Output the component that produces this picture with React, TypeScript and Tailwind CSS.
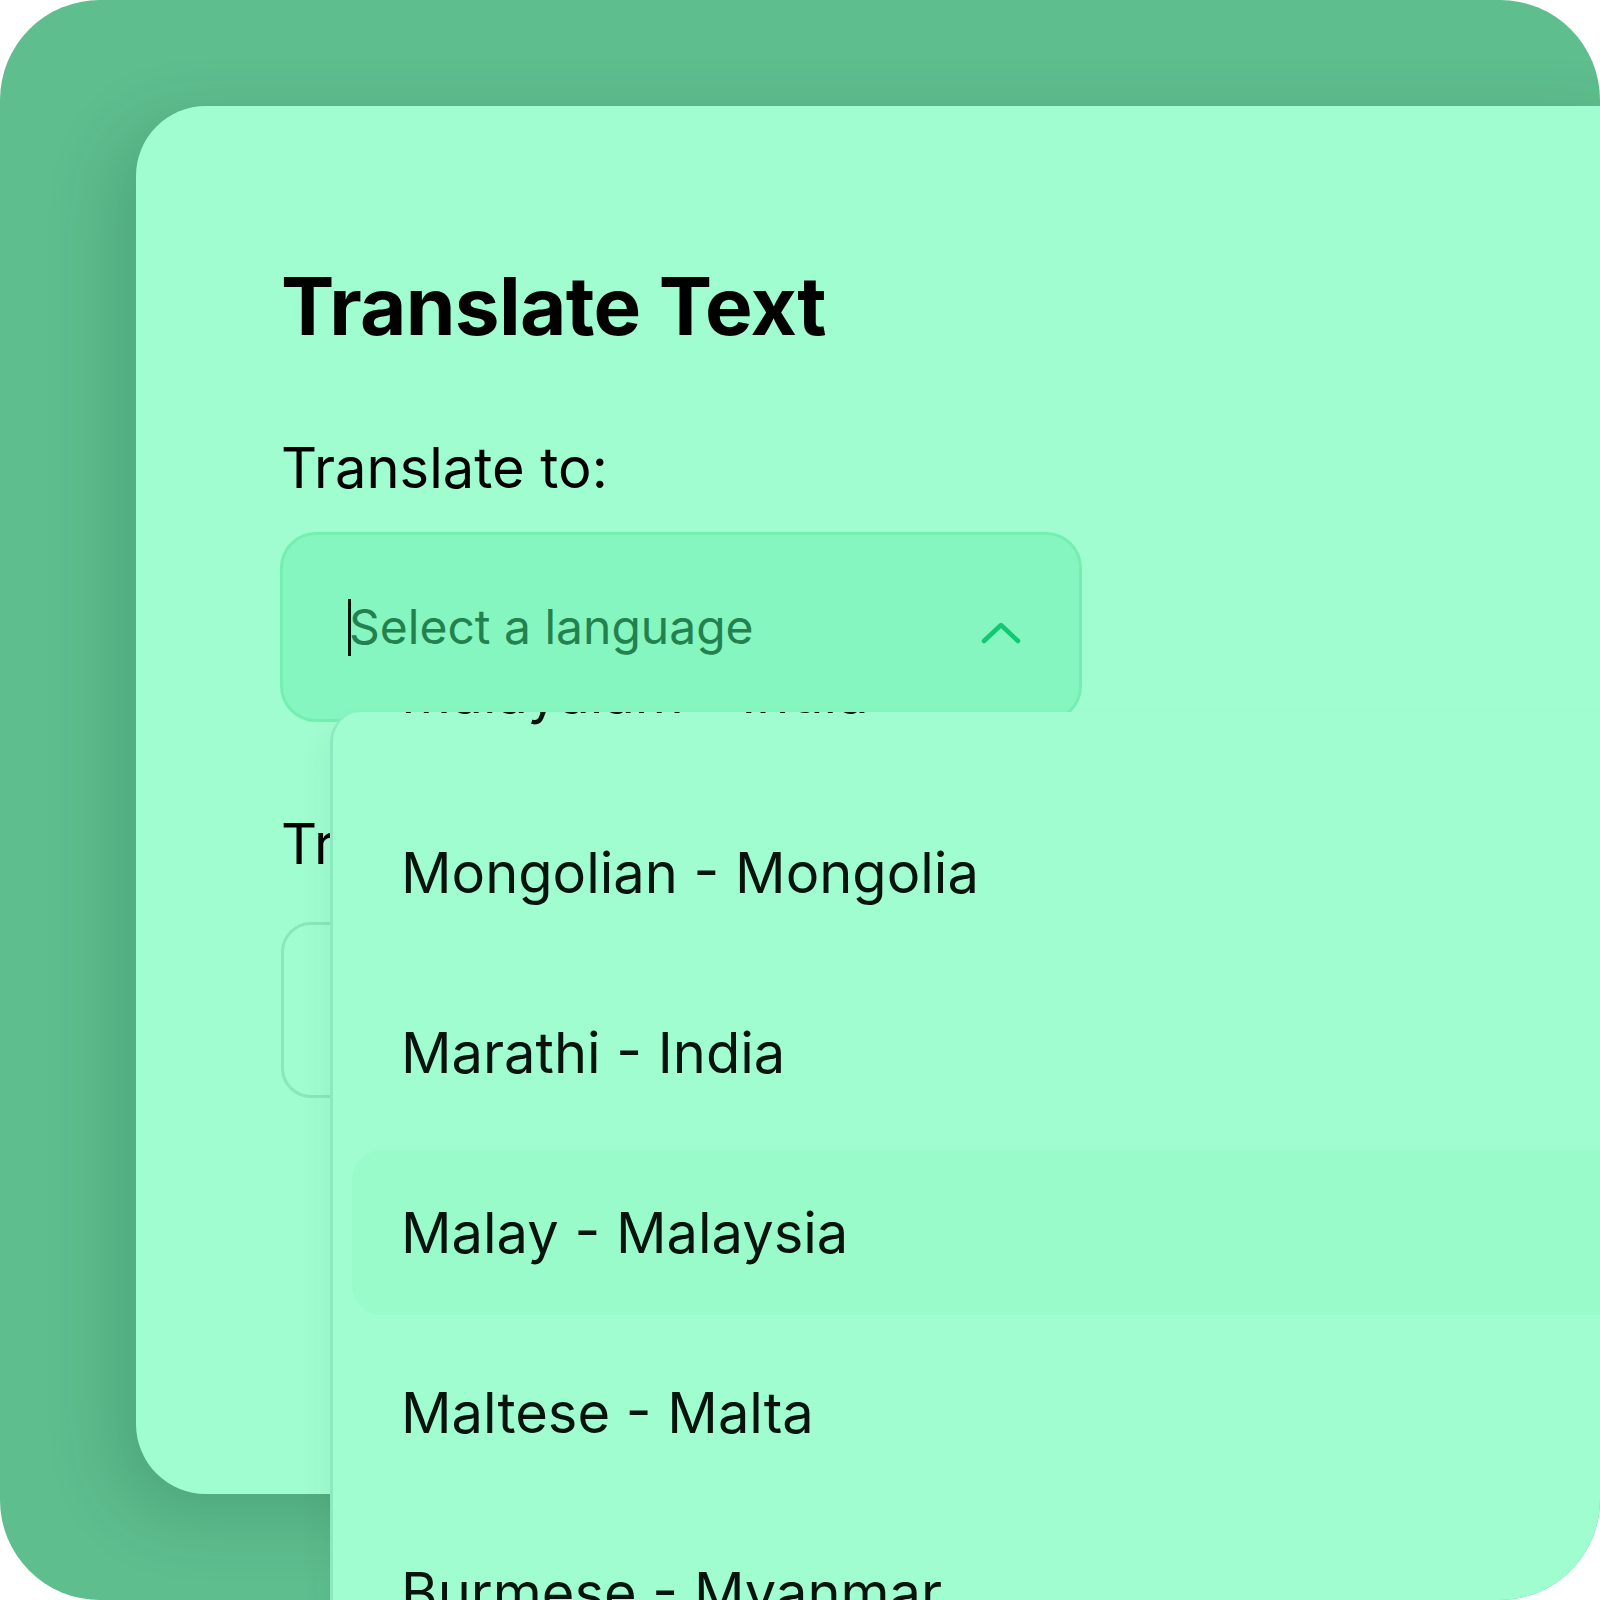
import React from 'react';

const languages = [
  'Malayalam - India',
  'Mongolian - Mongolia',
  'Marathi - India',
  'Malay - Malaysia',
  'Maltese - Malta',
  'Burmese - Myanmar',
  'Nepali - Nepal',
];

const ACTIVE = 'Malay - Malaysia';

function ChevronUp() {
  return (
    <svg width="40" height="24" viewBox="0 0 40 24" fill="none" className="mt-[12px] shrink-0">
      <polyline
        points="3,20 20,4 37,20"
        stroke="#12c873"
        strokeWidth="4.5"
        strokeLinecap="round"
        strokeLinejoin="round"
      />
    </svg>
  );
}

function LanguageMenu() {
  return (
    <div className="absolute left-[330px] top-[712px] w-[1300px] h-[900px] overflow-hidden rounded-tl-[30px] border-l-[3px] border-[#8ce8bf] bg-[#a0fdd0] shadow-[-6px_16px_30px_rgba(0,60,30,0.05)]">
      <div className="-mt-[102px] flex flex-col gap-[15px] pl-[19px]">
        {languages.map((lang) => (
          <div
            key={lang}
            className={`flex h-[165px] items-center rounded-l-[30px] pl-[49px] text-[56px] leading-none text-[#06140d] ${
              lang === ACTIVE ? 'bg-[#98fbc9]' : ''
            }`}
          >
            {lang}
          </div>
        ))}
      </div>
    </div>
  );
}

export default function App() {
  return (
    <div className="w-[1600px] h-[1600px] bg-white" style={{ fontFamily: 'Inter, "Noto Sans", sans-serif' }}>
      <div className="relative h-full w-full overflow-hidden rounded-[100px] bg-[#5ebe8e] pl-[136px] pt-[106px]">
        <div className="h-[1388px] w-[1500px] rounded-l-[70px] bg-[#a0fdd0] pl-[145px] pt-[160px] shadow-[-20px_20px_70px_rgba(0,60,30,0.18)]">
          <h1 className="text-[80px] font-bold leading-none tracking-[-0.7px] text-black">Translate Text</h1>

          <p className="mt-[94px] text-[56px] leading-none text-black">Translate to:</p>

          <div className="mt-[36px] flex h-[190px] w-[802px] -ml-[1px] items-center justify-between rounded-[36px] border-[3px] border-[#74efb2] bg-[#86f6c0] pl-[65px] pr-[58px]">
            <div className="flex items-center">
              <span className="mr-[-2px] h-[57px] w-[3px] bg-[#04140b]" />
              <span className="text-[48px] leading-none text-[#23814f]">Select a language</span>
            </div>
            <ChevronUp />
          </div>

          <p className="mt-[94px] text-[56px] leading-none text-black">Translation:</p>

          <div className="mt-[50px] h-[176px] w-[802px] rounded-[30px] border-[3px] border-[#8ae6bb]" />
        </div>

        <LanguageMenu />
      </div>
    </div>
  );
}
